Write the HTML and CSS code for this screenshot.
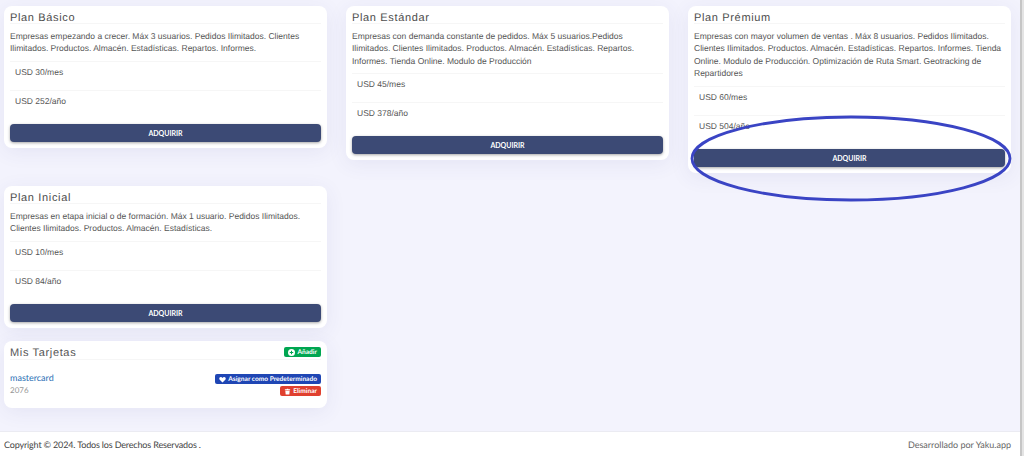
FILE: index.html
```html
<!DOCTYPE html>
<html lang="es">
<head>
  <meta charset="UTF-8" />
  <meta name="viewport" content="width=device-width, initial-scale=1.0"/>
  <title>Planes | Yaku</title>
  <link rel="stylesheet" href="styles.css">
</head>
<body>

  <main class="main-content">
    <div class="plans-grid">

      <section class="card">
        <h4 class="card-title">Plan Básico</h4>
        <p class="plan-desc">Empresas empezando a crecer. Máx 3 usuarios. Pedidos Ilimitados. Clientes Ilimitados. Productos. Almacén. Estadísticas. Repartos. Informes.</p>
        <ul class="price-list">
          <li>USD 30/mes</li>
          <li>USD 252/año</li>
        </ul>
        <button class="btn-buy">ADQUIRIR</button>
      </section>

      <section class="card">
        <h4 class="card-title">Plan Estándar</h4>
        <p class="plan-desc">Empresas con demanda constante de pedidos. Máx 5 usuarios.Pedidos Ilimitados. Clientes Ilimitados. Productos. Almacén. Estadísticas. Repartos. Informes. Tienda Online. Modulo de Producción</p>
        <ul class="price-list">
          <li>USD 45/mes</li>
          <li>USD 378/año</li>
        </ul>
        <button class="btn-buy">ADQUIRIR</button>
      </section>

      <section class="card">
        <h4 class="card-title">Plan Prémium</h4>
        <p class="plan-desc">Empresas con mayor volumen de ventas . Máx 8 usuarios. Pedidos Ilimitados. Clientes Ilimitados. Productos. Almacén. Estadísticas. Repartos. Informes. Tienda Online. Modulo de Producción. Optimización de Ruta Smart. Geotracking de Repartidores</p>
        <ul class="price-list">
          <li>USD 60/mes</li>
          <li>USD 504/año</li>
        </ul>
        <button class="btn-buy">ADQUIRIR</button>
      </section>

      <section class="card">
        <h4 class="card-title">Plan Inicial</h4>
        <p class="plan-desc">Empresas en etapa inicial o de formación. Máx 1 usuario. Pedidos Ilimitados. Clientes Ilimitados. Productos. Almacén. Estadísticas.</p>
        <ul class="price-list">
          <li>USD 10/mes</li>
          <li>USD 84/año</li>
        </ul>
        <button class="btn-buy">ADQUIRIR</button>
      </section>

      <section class="card cards-box">
        <div class="cards-head">
          <h4 class="cards-title">Mis Tarjetas</h4>
          <a href="#" class="tag tag-green">
            <svg class="tag-icon" viewBox="0 0 16 16"><circle cx="8" cy="8" r="8" fill="#fff"/><path d="M8 4v8M4 8h8" stroke="#00a651" stroke-width="2.4"/></svg>
            Añadir
          </a>
        </div>
        <div class="saved-card">
          <div>
            <div class="saved-brand">mastercard</div>
            <div class="saved-num">2076</div>
          </div>
          <div class="saved-actions">
            <a href="#" class="tag tag-blue">
              <svg class="tag-icon" viewBox="0 0 16 16"><path fill="#fff" d="M8 15 1.600 8.600C-.3 6.600.5 2.200 4 2.200c1.800 0 3.200 1 4 2.400.8-1.400 2.200-2.400 4-2.400 3.500 0 4.300 4.400 2.400 6.400z"/></svg>
              Asignar como Predeterminado
            </a>
            <a href="#" class="tag tag-red">
              <svg class="tag-icon" viewBox="0 0 16 16"><path fill="#fff" d="M2 3h4l.5-1.500h3L10 3h4v2H2zM3 6h10l-.8 9H3.800z"/></svg>
              Eliminar
            </a>
          </div>
        </div>
      </section>

    </div>
  </main>

  <footer class="footer">
    <span class="footer-left">Copyright © 2024. Todos los Derechos Reservados .</span>
    <span class="footer-right">Desarrollado por Yaku.app</span>
  </footer>

  <!-- barra de scroll de la captura -->
  <div class="scroll-strip"></div>

  <!-- anotación a mano sobre el botón del plan prémium -->
  <svg class="scribble" viewBox="0 0 1024 456" width="1024" height="456">
    <ellipse cx="851" cy="158.500" rx="159" ry="41.500" fill="none" stroke="#3a44c4" stroke-width="2.800"/>
  </svg>

</body>
</html>
```

FILE: styles.css
```css
* { box-sizing: border-box; margin: 0; padding: 0; }
html, body { height: 100%; }
body {
  position: relative;
  display: flex;
  flex-direction: column;
  background: #f3f3fd;
  color: #4a4a4a;
  font-family: 'Liberation Sans', Arial, sans-serif;
  font-size: 10px;
  overflow: hidden;
  text-rendering: geometricPrecision;
}
a { color: inherit; text-decoration: none; }

.main-content { flex: 1 1 auto; padding: 6px 13px 0 4px; }

.plans-grid {
  display: grid;
  grid-template-columns: repeat(3, 323px);
  column-gap: 19px;
  row-gap: 13.300px;
  align-items: start;
}

.card {
  display: flex;
  flex-direction: column;
  background: #fff;
  border-radius: 8px;
  padding: 0 6px 6px 6px;
  box-shadow: 0 4px 20px rgba(60,60,140,0.08);
}
.cards-box { grid-column: 1; padding-bottom: 12px; }

.card-title {
  font-size: 11px;
  font-weight: normal;
  letter-spacing: 0.65px;
  line-height: 16px;
  color: #4d4d4d;
  padding-top: 4px;
  border-bottom: 1px solid #f6f6f6;
  height: 18px;
}
.plan-desc {
  font-size: 8.500px;
  line-height: 12.400px;
  color: #555;
  padding: 6px 0 6px 0;
}
.price-list { list-style: none; }
.price-list li {
  font-size: 8.500px;
  color: #555;
  height: 29px;
  line-height: 20px;
  padding: 0 5px;
  border-top: 1px solid #f6f6f6;
}
.btn-buy {
  display: block;
  width: 100%;
  height: 18px;
  margin-top: 5px;
  background: #3c4a75;
  color: #fff;
  border: none;
  border-radius: 4px;
  font-family: 'Lato', sans-serif;
  font-size: 7px;
  font-weight: 700;
  box-shadow: 0 1px 3px rgba(0,0,0,0.35);
}

.cards-head {
  display: flex;
  justify-content: space-between;
  align-items: flex-start;
  height: 19px;
  padding-top: 6px;
  border-bottom: 1px solid #f6f6f6;
}
.cards-title {
  font-size: 11px;
  font-weight: normal;
  line-height: 12px;
  letter-spacing: 0.65px;
  color: #555;
}
.saved-card {
  display: flex;
  justify-content: space-between;
  align-items: flex-start;
  padding-top: 12px;
  font-family: 'Lato', sans-serif;
}
.saved-brand { font-size: 9px; line-height: 12px; color: #2a6fb5; }
.saved-num { font-size: 8px; line-height: 12px; color: #999; }
.saved-actions {
  display: flex;
  flex-direction: column;
  align-items: flex-end;
  gap: 2px;
  margin-top: 2px;
}

.tag {
  display: inline-flex;
  align-items: center;
  gap: 2px;
  height: 10px;
  padding: 0 4px;
  border-radius: 2px;
  color: #fff;
  font-family: 'Lato', sans-serif;
  font-size: 6.600px;
  font-weight: 700;
  line-height: 1;
}
.tag-icon { width: 7px; height: 7px; display: block; }
.tag-green { background: #00a651; }
.tag-blue { background: #1f46b4; }
.tag-red { background: #e0402f; }

.footer {
  flex: 0 0 25px;
  display: flex;
  justify-content: space-between;
  align-items: center;
  padding: 1px 13px 0 4px;
  background: #fff;
  border-top: 1px solid #ebebf2;
  font-family: 'Lato', sans-serif;
  font-size: 9px;
  color: #444;
}
.footer-left { letter-spacing: -0.16px; }
.footer-right { color: #666; }

.scroll-strip {
  position: absolute;
  top: 0;
  right: 0;
  bottom: 0;
  width: 4px;
  background: #e4e4e4;
  border-left: 2px solid #c6c6c6;
}

.scribble {
  position: absolute;
  left: 0;
  top: 0;
  pointer-events: none;
}
```
